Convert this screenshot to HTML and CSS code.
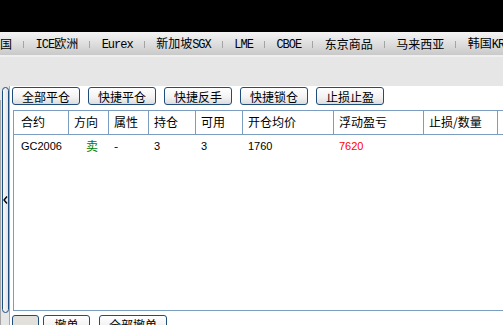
FILE: index.html
```html
<!DOCTYPE html>
<html lang="zh-CN">
<head>
  <meta charset="UTF-8">
  <title>持仓</title>
  <link rel="stylesheet" href="styles.css">
</head>
<body>
  <div class="topbar"></div>
  <div class="tabs">
    <span class="tab">国</span><span class="sep"></span>
    <span class="tab"><span class="lat">ICE</span>欧洲</span><span class="sep"></span>
    <span class="tab"><span class="lat">Eurex</span></span><span class="sep"></span>
    <span class="tab">新加坡<span class="lat">SGX</span></span><span class="sep"></span>
    <span class="tab"><span class="lat">LME</span></span><span class="sep"></span>
    <span class="tab"><span class="lat">CBOE</span></span><span class="sep"></span>
    <span class="tab">东京商品</span><span class="sep"></span>
    <span class="tab">马来西亚</span><span class="sep"></span>
    <span class="tab">韩国<span class="lat">KRX</span></span>
  </div>

  <div class="main">
    <div class="side"></div>
    <div class="handle">
      <svg width="5" height="8" viewBox="0 0 5 8"><polyline points="4,0.5 1,4 4,7.5" fill="none" stroke="#000" stroke-width="1.4"/></svg>
    </div>
    <div class="panel">
      <div class="toolbar">
        <button class="btn">全部平仓</button>
        <button class="btn">快捷平仓</button>
        <button class="btn">快捷反手</button>
        <button class="btn">快捷锁仓</button>
        <button class="btn">止损止盈</button>
      </div>

      <div class="grid">
        <div class="row head">
          <div class="cell">合约</div>
          <div class="cell">方向</div>
          <div class="cell">属性</div>
          <div class="cell">持仓</div>
          <div class="cell">可用</div>
          <div class="cell">开仓均价</div>
          <div class="cell">浮动盈亏</div>
          <div class="cell">止损/数量</div>
          <div class="cell"></div>
        </div>
        <div class="row data">
          <div class="cell num">GC2006</div>
          <div class="cell dir sell">卖</div>
          <div class="cell">-</div>
          <div class="cell num">3</div>
          <div class="cell num">3</div>
          <div class="cell num">1760</div>
          <div class="cell num loss">7620</div>
          <div class="cell"></div>
          <div class="cell"></div>
        </div>
      </div>

      <div class="bottom">
        <button class="btn small"></button>
        <button class="btn mid">撤单</button>
        <button class="btn">全部撤单</button>
      </div>
    </div>
  </div>
</body>
</html>
```

FILE: styles.css
```css
* {
  box-sizing: border-box;
}

body {
  margin: 0;
  width: 503px;
  height: 325px;
  overflow: hidden;
  font-family: "Noto Sans CJK SC", "Liberation Sans", sans-serif;
  font-size: 12px;
  color: #000;
  background: #e6e6e6;
}

.topbar {
  height: 32px;
  background: #000;
}

.tabs {
  height: 25px;
  display: flex;
  align-items: center;
  gap: 11.25px;
  padding-top: 1px;
  white-space: nowrap;
  overflow: hidden;
  background: linear-gradient(#f4f4f4, #c9c9c9);
  border-bottom: 2px solid #efefef;
}

.tab {
  font-size: 12px;
  line-height: 16px;
  flex: none;
}

.lat {
  font-family: "Liberation Mono", monospace;
  font-size: 12px;
  letter-spacing: -1px;
}

.sep {
  width: 1px;
  height: 7px;
  background: #a4a4a4;
  flex: none;
}

.main {
  display: flex;
  height: 268px;
}

.side {
  width: 3px;
  margin-top: 43px;
  background: #dcdcdc;
  border-right: 1px solid #a6a6a6;
}

.handle {
  width: 7px;
  height: 226px;
  margin-top: 30px;
  margin-left: 1px;
  border: 1px solid #1d4d80;
  border-radius: 4px;
  background: linear-gradient(90deg, #f7f7f7, #e4e4e4);
  display: flex;
  align-items: center;
  justify-content: center;
}

.panel {
  flex: 1;
  margin-top: 29px;
  background: #fff;
  border-left: 1px solid #a8a8a8;
  padding: 1px 0 0 2px;
}

.toolbar {
  display: flex;
  gap: 8px;
}

.btn {
  width: 68px;
  height: 18px;
  padding: 0;
  border: 1px solid #1f4d7c;
  border-radius: 3px;
  background: linear-gradient(#ffffff, #f2f2f2 60%, #dcdcdc);
  font-family: "Noto Sans CJK SC", sans-serif;
  font-size: 12px;
  line-height: 15px;
  color: #000;
}

.grid {
  margin: 5px 0 0 1px;
  height: 201px;
  border-left: 1px solid #7b9dc1;
  border-bottom: 1px solid #7b9dc1;
}

.row {
  display: grid;
  grid-template-columns: 55px 40px 40px 47px 47px 91px 90px 74px 80px;
}

.head {
  height: 25px;
  border-top: 1px solid #7b9dc1;
  border-bottom: 1px solid #7b9dc1;
}

.head .cell {
  border-right: 1px solid #7b9dc1;
  line-height: 22px;
  padding-left: 5px;
}

.head .cell:first-child {
  padding-left: 7px;
}

.data {
  height: 22px;
}

.data .cell {
  line-height: 22px;
  padding-left: 5px;
}

.data .cell:first-child {
  padding-left: 7px;
}

.num {
  font-family: "Liberation Sans", sans-serif;
  font-size: 11px;
}

.dir {
  padding-left: 17px !important;
}

.sell {
  color: #008000;
}

.loss {
  color: #ff0000;
}

.bottom {
  display: flex;
  margin-top: 4px;
  gap: 4px;
}

.btn.small {
  width: 27px;
  background: #e2e0da;
}

.btn.mid {
  width: 47px;
  margin-right: 5px;
}
```
